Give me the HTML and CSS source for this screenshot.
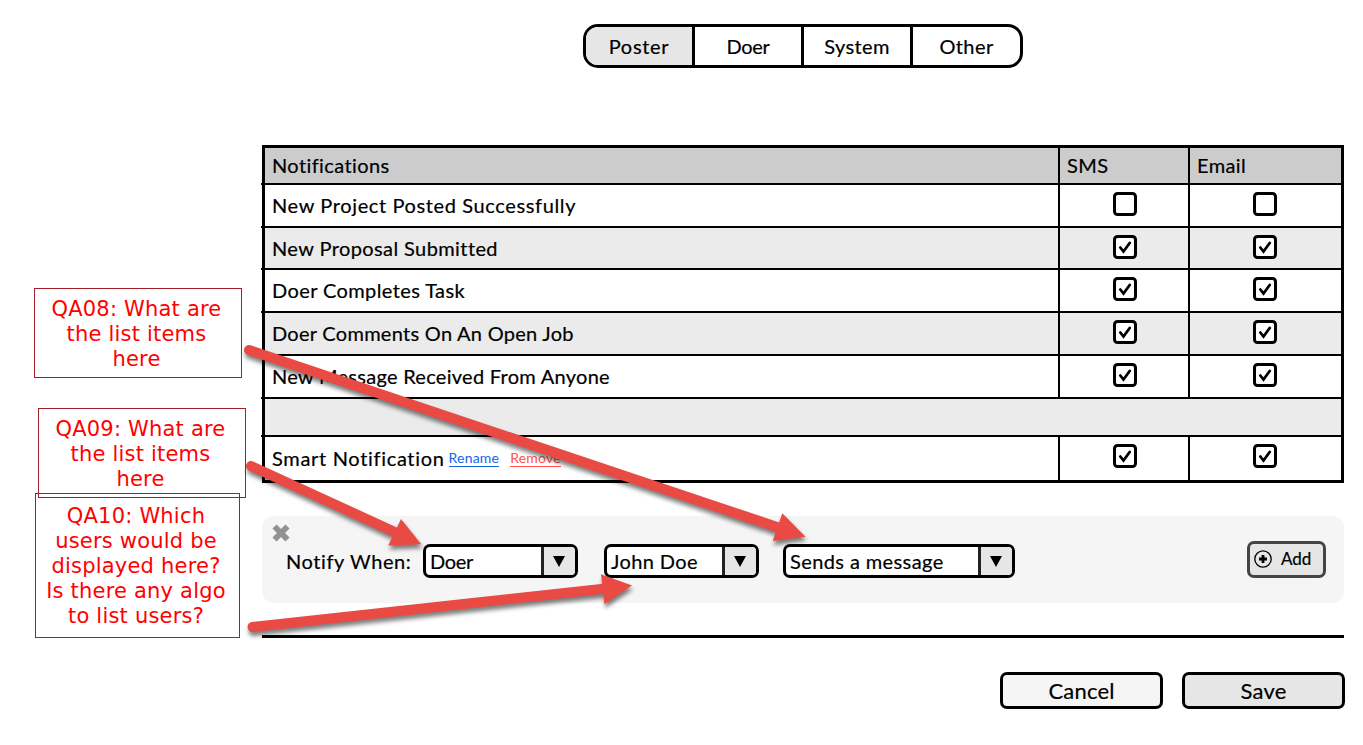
FILE: index.html
```html
<!DOCTYPE html>
<html lang="en">
<head>
<meta charset="utf-8">
<title>Notifications</title>
<link rel="stylesheet" href="styles.css">
</head>
<body>
<svg class="defs" width="0" height="0"><defs>
<g id="empty"><rect x="1.5" y="1.5" width="21" height="21" rx="3" fill="#fff" stroke="#000" stroke-width="3"/></g>
<g id="check"><use href="#empty"/><path d="M7.300 12.500l3.200 4 6.200-8.500" fill="none" stroke="#000" stroke-width="2.800" stroke-linecap="round"/></g>
</defs></svg>
<main class="page">
<nav class="tabs">
<div class="tab active"><span class="t-wide">Poster</span></div><div class="tab"><span class="t-tight">Doer</span></div><div class="tab"><span>System</span></div><div class="tab"><span>Other</span></div>
</nav>
<section class="table">
<div class="row head"><div class="cell"><span>Notifications</span></div><div class="cell"><span>SMS</span></div><div class="cell"><span>Email</span></div></div>
<div class="row"><div class="cell"><span class="t-project">New Project Posted Successfully</span></div><div class="cell box"><svg><use href="#empty"/></svg></div><div class="cell box"><svg><use href="#empty"/></svg></div></div>
<div class="row short alt"><div class="cell"><span>New Proposal Submitted</span></div><div class="cell box"><svg><use href="#check"/></svg></div><div class="cell box"><svg><use href="#check"/></svg></div></div>
<div class="row"><div class="cell"><span>Doer Completes Task</span></div><div class="cell box"><svg><use href="#check"/></svg></div><div class="cell box"><svg><use href="#check"/></svg></div></div>
<div class="row alt"><div class="cell"><span class="t-long">Doer Comments On An Open Job</span></div><div class="cell box"><svg><use href="#check"/></svg></div><div class="cell box"><svg><use href="#check"/></svg></div></div>
<div class="row"><div class="cell"><span class="t-long">New Message Received From Anyone</span></div><div class="cell box"><svg><use href="#check"/></svg></div><div class="cell box"><svg><use href="#check"/></svg></div></div>
<div class="row gap alt"></div>
<div class="row last"><div class="cell"><span class="t-smart">Smart Notification</span><a class="rename">Rename</a><a class="remove">Remove</a></div><div class="cell box"><svg><use href="#check"/></svg></div><div class="cell box"><svg><use href="#check"/></svg></div></div>
</section>
<section class="panel">
<svg class="close" viewBox="0 0 18 18"><path d="M2.500 2.500l13 13M15.500 2.500l-13 13" stroke="#929292" stroke-width="5.800"/></svg>
<span class="label">Notify When:</span>
<div class="select"><div class="value t-tight">Doer</div><div class="drop"><svg viewBox="0 0 12 11"><path d="M0 0h12L6 11z"/></svg></div></div>
<div class="select person"><div class="value">John Doe</div><div class="drop"><svg viewBox="0 0 12 11"><path d="M0 0h12L6 11z"/></svg></div></div>
<div class="select event"><div class="value">Sends a message</div><div class="drop"><svg viewBox="0 0 12 11"><path d="M0 0h12L6 11z"/></svg></div></div>
<button class="add"><svg viewBox="0 0 18 18"><circle cx="9" cy="9" r="8.200" fill="none" stroke="#000" stroke-width="1.300"/><path d="M9 5v8M5 9h8" stroke="#000" stroke-width="2.800"/></svg><span>Add</span></button>
</section>
<hr class="rule">
<footer class="actions"><button class="btn">Cancel</button><button class="btn save">Save</button></footer>
</main>
<aside class="note n8">QA08: What are<br>the list items<br>here</aside>
<aside class="note n9">QA09: What are<br>the list items<br>here</aside>
<aside class="note n10">QA10: Which<br>users would be<br>displayed here?<br>Is there any algo<br>to list users?</aside>
<svg class="arrows" viewBox="0 0 1363 745">
<g><path d="M249 350L780 528"/><path class="tip" d="M805.500 536.700L782.300 513.300L772.700 541z"/></g>
<g><path d="M251 466L397 533"/><path class="tip" d="M421.300 544.300L401 519L388.300 545.500z"/></g>
<g><path d="M252.500 627L606 588.500"/><path class="tip" d="M632 585.500L601 574.300L604.500 604z"/></g>
</svg>
</body>
</html>
```
FILE: styles.css
```css
*{box-sizing:border-box}
body{margin:0;background:#fff;color:#000;font:20px/24px Lato,sans-serif;letter-spacing:.4px;font-variant-ligatures:none;-webkit-text-stroke:.2px;width:1363px;height:745px;overflow:hidden;position:relative}
.defs{position:absolute}
.page{padding:24px 18px 0 262px}
.tabs{display:grid;grid-template-columns:109px 109px 109px 107px;width:440px;height:44px;margin-left:321px;border:3px solid #000;border-radius:15px;overflow:hidden}
.tab{display:flex;align-items:center;justify-content:center;padding:0 0 1px 0;border-right:3px solid #000}
.tab:last-child{border:0;padding-right:0}
.active{background:#e6e6e6}
.t-wide{letter-spacing:.7px}
.t-tight{letter-spacing:-.3px}
.t-project{letter-spacing:.62px}
.t-long{letter-spacing:.28px}
.t-smart{letter-spacing:.68px}
.table{width:1082px;margin-top:77px;border:3px solid #000}
.row{position:relative;display:grid;grid-template-columns:793px 130px 153px;height:43px;border-bottom:2px solid #000}
/* row lines overshoot the outer border by a pixel */
.row:not(.last)::before{content:"";position:absolute;left:-4px;bottom:-2px;width:1px;height:2px;background:#000}
.cell{display:flex;align-items:center;padding-left:7px;padding-bottom:1px;border-left:2px solid #000}
.cell:first-child{border:0}
.head{height:37px;background:#ccc}
.short{height:42px}
.alt{background:#ebebeb}
.gap{height:38px}
.last{height:43px;border:0}
.box{padding:7px 0 0 53px;align-items:flex-start}
.box:last-child{padding-left:63px}
.box svg{width:24px;height:24px}
.rename,.remove{font-size:14px;line-height:16px;letter-spacing:.2px;color:#1565e8;margin-left:4px;border-bottom:1px solid;-webkit-text-stroke:0}
.remove{color:#ff544d;margin-left:11px}
.panel{display:flex;width:1082px;height:87px;margin-top:33px;padding-top:28px;background:#f5f5f5;border-radius:12px}
.close{width:18px;height:18px;margin:-20px 0 0 10px}
.label{width:133px;margin-left:-4px;padding-top:5px;letter-spacing:.6px}
.select{display:flex;width:155px;height:34px;background:#fff;border:3px solid #000;border-radius:7px;margin-left:4px;overflow:hidden}
.value{flex:1;padding:2px 0 0 4px}
.drop{display:flex;align-items:center;justify-content:center;width:34px;padding-right:2px;background:#e6e6e6;border-left:3px solid #222}
.drop svg{width:12px;height:11px}
.person{margin-left:26px}
.event{width:232px;margin-left:24px}
.add{display:flex;align-items:center;width:79px;height:37px;margin:-3px 18px 0 auto;padding:0 0 2px 4px;font:17px/20px Lato,sans-serif;background:#e6e6e6;border:3px solid #444;border-radius:7px}
.add svg{width:18px;height:18px;margin-right:9px}
.rule{width:1082px;height:3px;margin:32px 0 0;border:0;background:#000}
.actions{display:flex;gap:19px;justify-content:flex-end;margin:34px 0 0}
.btn{width:163px;height:37px;font:22px/26px Lato,sans-serif;letter-spacing:.2px;background:#f5f5f5;border:3px solid #000;border-radius:7px;padding:0}
.save{background:#e6e6e6}
.note{position:absolute;border:1px solid #a32028;color:#f00;font:21px/25px "DejaVu Sans",sans-serif;letter-spacing:.2px;-webkit-text-stroke:0;text-align:center;white-space:nowrap;padding:8px 3px 0 0}
.n8{left:34px;top:288px;width:208px;height:90px}
.n9{left:38px;top:408px;width:208px;height:90px}
.n10{left:35px;top:493px;width:205px;height:145px;padding-top:10px}
.arrows{position:absolute;left:0;top:0;width:1363px;height:745px;fill:none;stroke:#e94a44;stroke-width:10;stroke-linecap:round}
.arrows g{filter:drop-shadow(1px 4px 2px rgba(0,0,0,.5))}
.arrows .tip{fill:#e94a44;stroke:none}
```
